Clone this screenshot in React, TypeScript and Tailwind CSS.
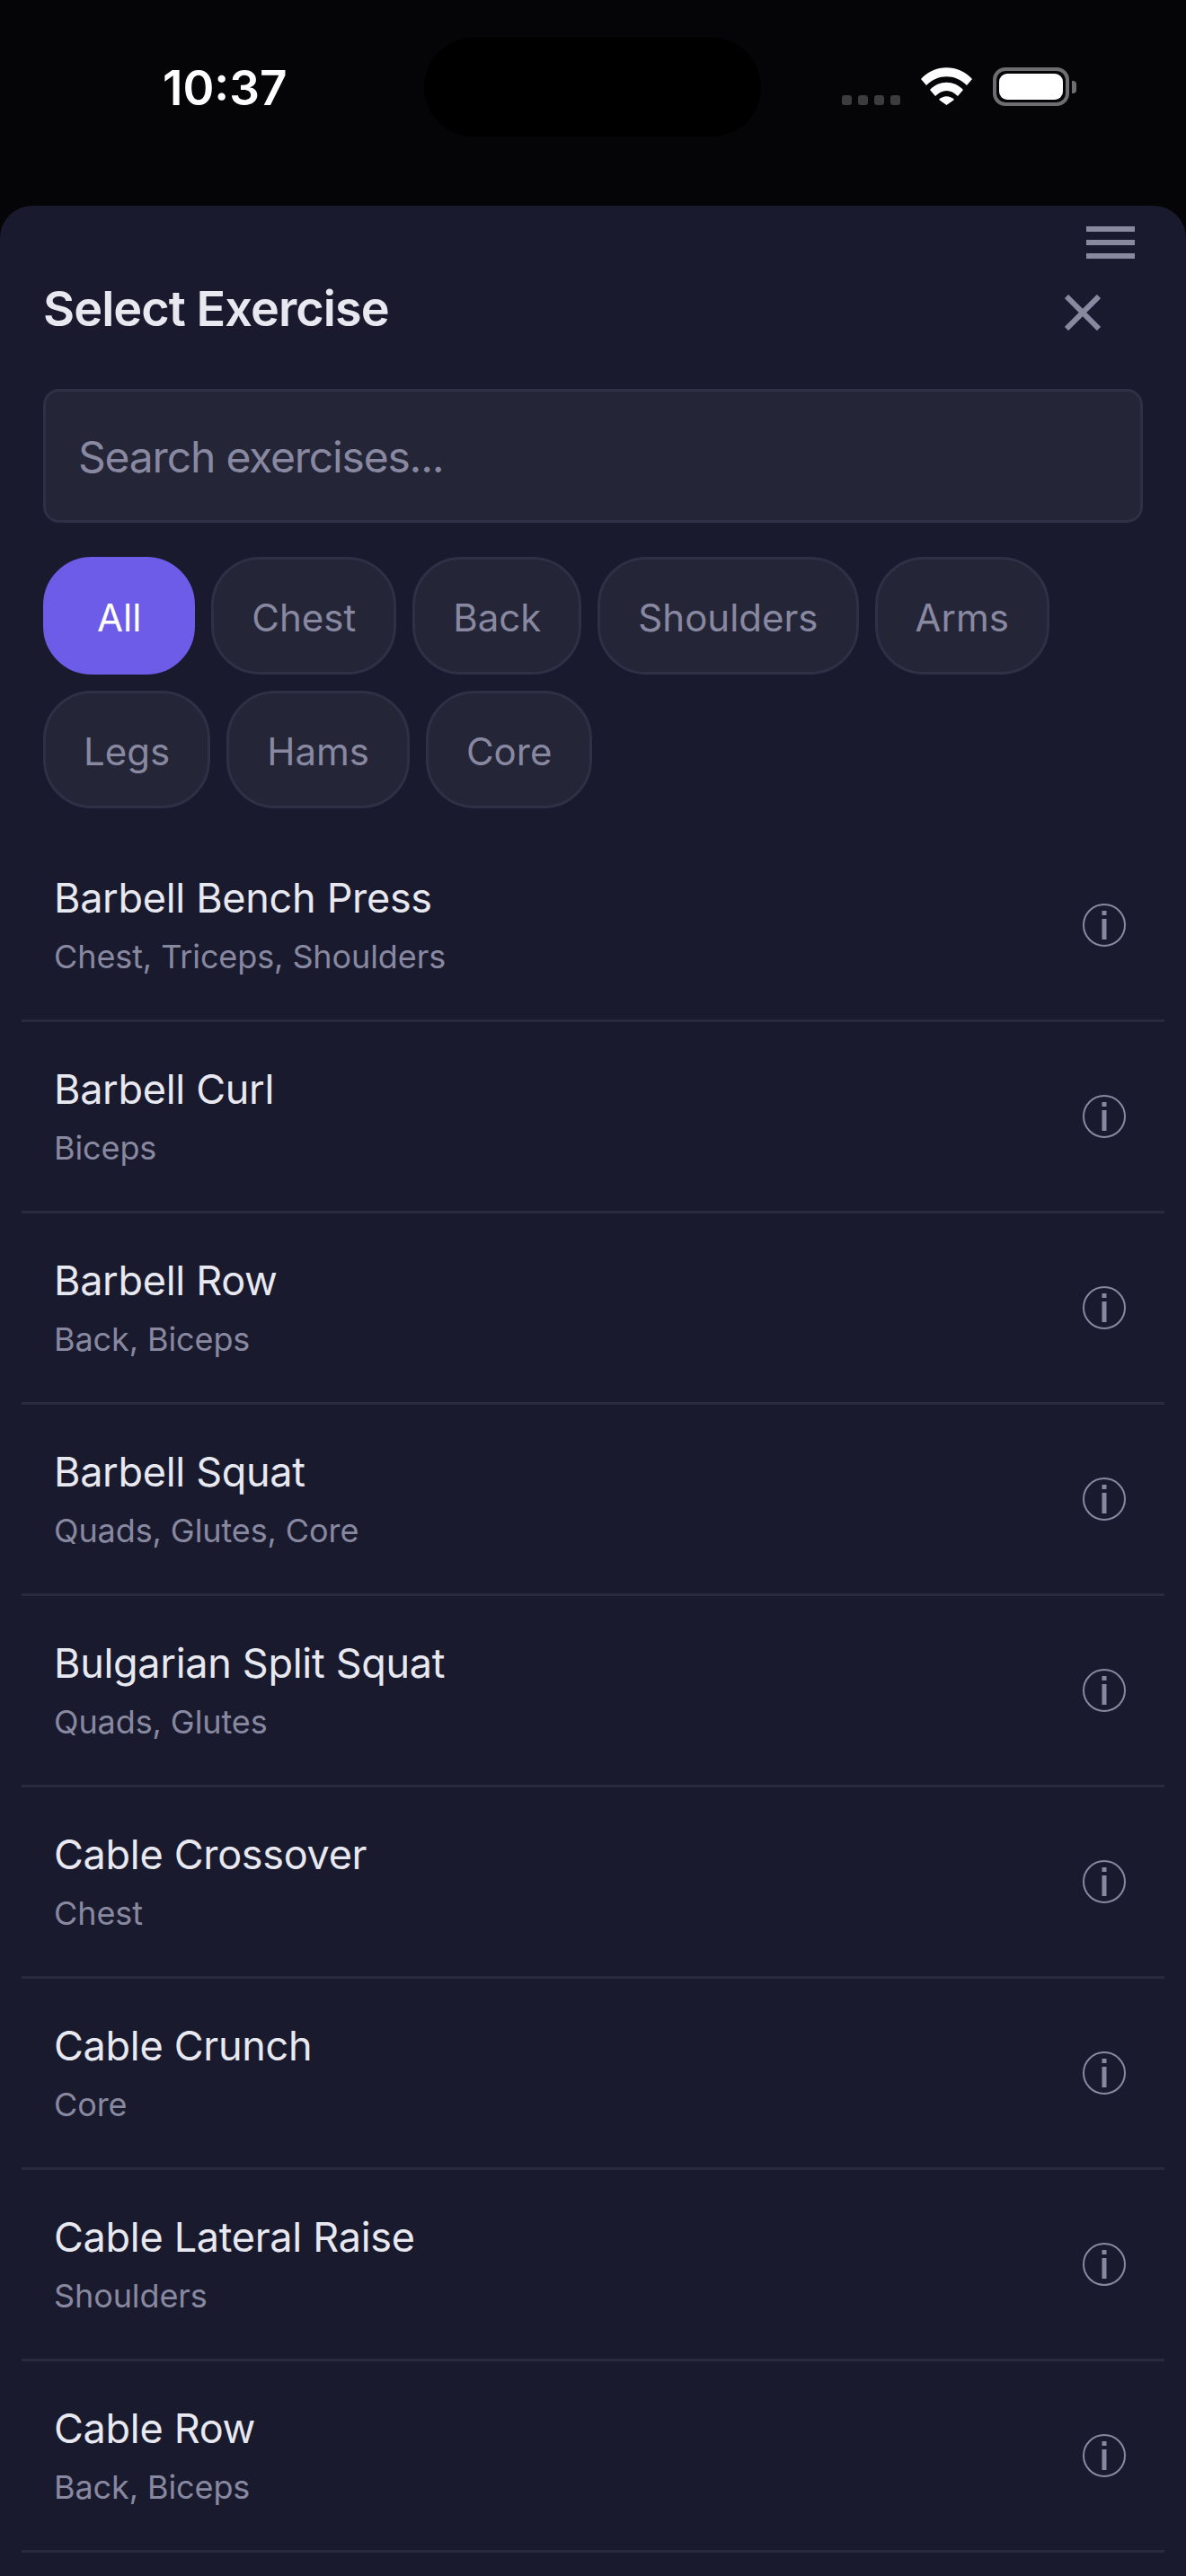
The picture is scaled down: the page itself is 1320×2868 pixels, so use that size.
const categories = ["All", "Chest", "Back", "Shoulders", "Arms", "Legs", "Hams", "Core"];

const exercises = [
  { name: "Barbell Bench Press", muscles: "Chest, Triceps, Shoulders" },
  { name: "Barbell Curl", muscles: "Biceps" },
  { name: "Barbell Row", muscles: "Back, Biceps" },
  { name: "Barbell Squat", muscles: "Quads, Glutes, Core" },
  { name: "Bulgarian Split Squat", muscles: "Quads, Glutes" },
  { name: "Cable Crossover", muscles: "Chest" },
  { name: "Cable Crunch", muscles: "Core" },
  { name: "Cable Lateral Raise", muscles: "Shoulders" },
  { name: "Cable Row", muscles: "Back, Biceps" },
];

function StatusBar() {
  return (
    <div className="flex h-[229px] shrink-0 items-start bg-[#050508]">
      <div className="w-[181px] shrink-0" />
      <span className="mt-[67px] w-[291px] text-[53px] leading-[62px] font-semibold text-white">10:37</span>
      <div className="mt-[42px] h-[110px] w-[375px] shrink-0 rounded-[55px] bg-black" />
      <div className="ml-[90px] flex gap-[7px] pt-[106px]">
        <span className="h-[11px] w-[11px] rounded-[3px] bg-[#3c3c3e]" />
        <span className="h-[11px] w-[11px] rounded-[3px] bg-[#3c3c3e]" />
        <span className="h-[11px] w-[11px] rounded-[3px] bg-[#3c3c3e]" />
        <span className="h-[11px] w-[11px] rounded-[3px] bg-[#3c3c3e]" />
      </div>
      <svg className="mt-[75px] ml-[23px]" width="57" height="42" viewBox="0 0 57 42" fill="#fff">
        <path d="M0 13C15-4 42-4 57 13L51 20C38 7 19 7 6 20Z" />
        <path d="M10 25C20 14 37 14 47 25L41 32C33 24 24 24 16 32Z" />
        <path d="M20 36C25 31 32 31 37 36L28.5 42Z" />
      </svg>
      <div className="mt-[75px] ml-[23px] flex items-center">
        <div className="h-[43px] w-[85px] rounded-[14px] border-[4px] border-[#6e6e70] p-[3px]">
          <div className="h-full w-full rounded-[9px] bg-white" />
        </div>
        <div className="ml-[3px] h-[14px] w-[5px] rounded-r-[4px] bg-[#6e6e70]" />
      </div>
    </div>
  );
}

function InfoIcon() {
  return (
    <svg width="48" height="48" viewBox="0 0 48 48" fill="none" className="shrink-0">
      <circle cx="24" cy="24" r="23" stroke="#8888a0" strokeWidth="2" />
      <rect x="21.5" y="8" width="5" height="5" fill="#8888a0" />
      <rect x="21.5" y="17" width="5" height="23" fill="#8888a0" />
    </svg>
  );
}

export default function App() {
  return (
    <div className="flex h-[2868px] w-[1320px] flex-col overflow-hidden bg-[#050508] font-['Inter',sans-serif]">
      <StatusBar />

      <div className="flex-1 rounded-t-[36px] bg-[#1a1a2e]">
        <div className="flex justify-end pt-[23px] pr-[57px]">
          <div className="flex w-[54px] flex-col gap-[9px]">
            <span className="h-[6px] bg-[#8888a0]" />
            <span className="h-[6px] bg-[#8888a0]" />
            <span className="h-[6px] bg-[#8888a0]" />
          </div>
        </div>

        <div className="mt-[16px] flex items-center justify-between pr-[95px] pl-[48px]">
          <h1 className="text-[54px] leading-[80px] font-semibold tracking-[-0.95px] text-[#e8e8f0]">Select Exercise</h1>
          <svg width="40" height="40" viewBox="0 0 40 40" className="mt-[7px]">
            <path d="M2 2L38 38M38 2L2 38" stroke="#8888a0" strokeWidth="6" />
          </svg>
        </div>

        <input
          readOnly
          placeholder="Search exercises..."
          className="mx-[48px] mt-[49px] block h-[149px] w-[1224px] rounded-[18px] border-[3px] border-[#2f2f45] bg-[#252538] px-[36px] pt-[2px] text-[48px] tracking-[-1.2px] text-[#e8e8f0] outline-none placeholder:text-[#8888a0]"
        />

        <div className="mt-[38px] flex flex-wrap gap-[18px] px-[48px]">
          {categories.map((cat, i) => (
            <span
              key={cat}
              className={
                i === 0
                  ? "flex h-[131px] items-center rounded-[54px] border-[3px] border-[#6c5ce7] bg-[#6c5ce7] px-[57px] pt-[3px] text-[42px] text-white"
                  : "flex h-[131px] items-center rounded-[54px] border-[3px] border-[#2f2f45] bg-[#252538] px-[42px] pt-[3px] text-[42px] text-[#8888a0]"
              }
            >
              {cat}
            </span>
          ))}
        </div>

        <div className="mt-[25px] px-[24px]">
          {exercises.map((ex) => (
            <div
              key={ex.name}
              className="flex h-[213px] items-center justify-between border-b-[3px] border-[#2a2a3e] pr-[43px] pl-[36px]"
            >
              <div>
                <p className="text-[45px] leading-[60px] tracking-[-0.3px] text-[#e8e8f0]">{ex.name}</p>
                <p className="mt-[10px] text-[36px] leading-[50px] tracking-[-0.1px] text-[#8888a0]">{ex.muscles}</p>
              </div>
              <InfoIcon />
            </div>
          ))}
        </div>
      </div>
    </div>
  );
}
